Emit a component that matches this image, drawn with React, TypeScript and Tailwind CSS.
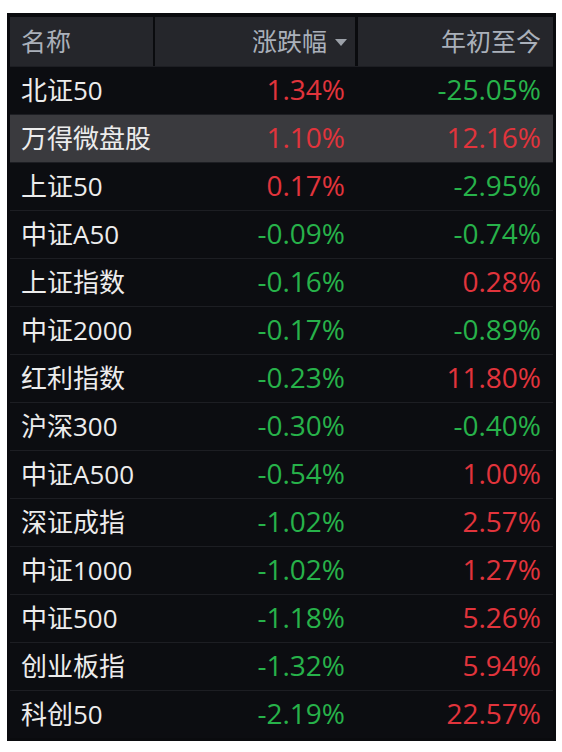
import React from "react";

type Row = { name: string; chg: string; ytd: string; hl?: boolean };

const rows: Row[] = [
  { name: "北证50", chg: "1.34%", ytd: "-25.05%" },
  { name: "万得微盘股", chg: "1.10%", ytd: "12.16%", hl: true },
  { name: "上证50", chg: "0.17%", ytd: "-2.95%" },
  { name: "中证A50", chg: "-0.09%", ytd: "-0.74%" },
  { name: "上证指数", chg: "-0.16%", ytd: "0.28%" },
  { name: "中证2000", chg: "-0.17%", ytd: "-0.89%" },
  { name: "红利指数", chg: "-0.23%", ytd: "11.80%" },
  { name: "沪深300", chg: "-0.30%", ytd: "-0.40%" },
  { name: "中证A500", chg: "-0.54%", ytd: "1.00%" },
  { name: "深证成指", chg: "-1.02%", ytd: "2.57%" },
  { name: "中证1000", chg: "-1.02%", ytd: "1.27%" },
  { name: "中证500", chg: "-1.18%", ytd: "5.26%" },
  { name: "创业板指", chg: "-1.32%", ytd: "5.94%" },
  { name: "科创50", chg: "-2.19%", ytd: "22.57%" },
];

const color = (v: string) => (v.startsWith("-") ? "text-[#27b24a]" : "text-[#e1343c]");

export default function App() {
  return (
    <div className="bg-white w-[562px] h-[752px] pt-[13px] pl-[7px] font-['Open_Sans','Noto_Sans_CJK_SC',sans-serif]">
      <div className="w-[549px] bg-[#0b0c10] border-[3px] border-t-[4px] border-[#0a0b0e]">
        <div className="grid grid-cols-[143px_2px_200px_3px_195px] h-[49px] bg-[#0a0b0e] text-[25px] text-[#aab0ba]">
          <div className="bg-[#25262b] flex items-center pl-[11px]">名称</div>
          <div />
          <div className="bg-[#25262b] flex items-center justify-end pr-[8px] gap-[8px]">
            <span>涨跌幅</span>
            <svg width="12" height="9" viewBox="0 0 12 9" className="mt-[1px]">
              <polygon points="0,1 12,1 6,8" fill="#9ca1a9" />
            </svg>
          </div>
          <div />
          <div className="bg-[#25262b] flex items-center justify-end pr-[12px]">年初至今</div>
        </div>
        {rows.map((r) => (
          <div
            key={r.name}
            className={`grid grid-cols-[145px_203px_195px] h-[48px] items-center text-[28px] border-t border-[#1d1e23] ${
              r.hl ? "bg-[#3a3a3e]" : "bg-[#0c0d11]"
            }`}
          >
            <div className="pl-[11px] text-[26px] text-[#ececec]">{r.name}</div>
            <div className={`text-right pr-[13px] pb-[3px] ${color(r.chg)}`}>{r.chg}</div>
            <div className={`text-right pr-[12px] pb-[3px] ${color(r.ytd)}`}>{r.ytd}</div>
          </div>
        ))}
      </div>
    </div>
  );
}
